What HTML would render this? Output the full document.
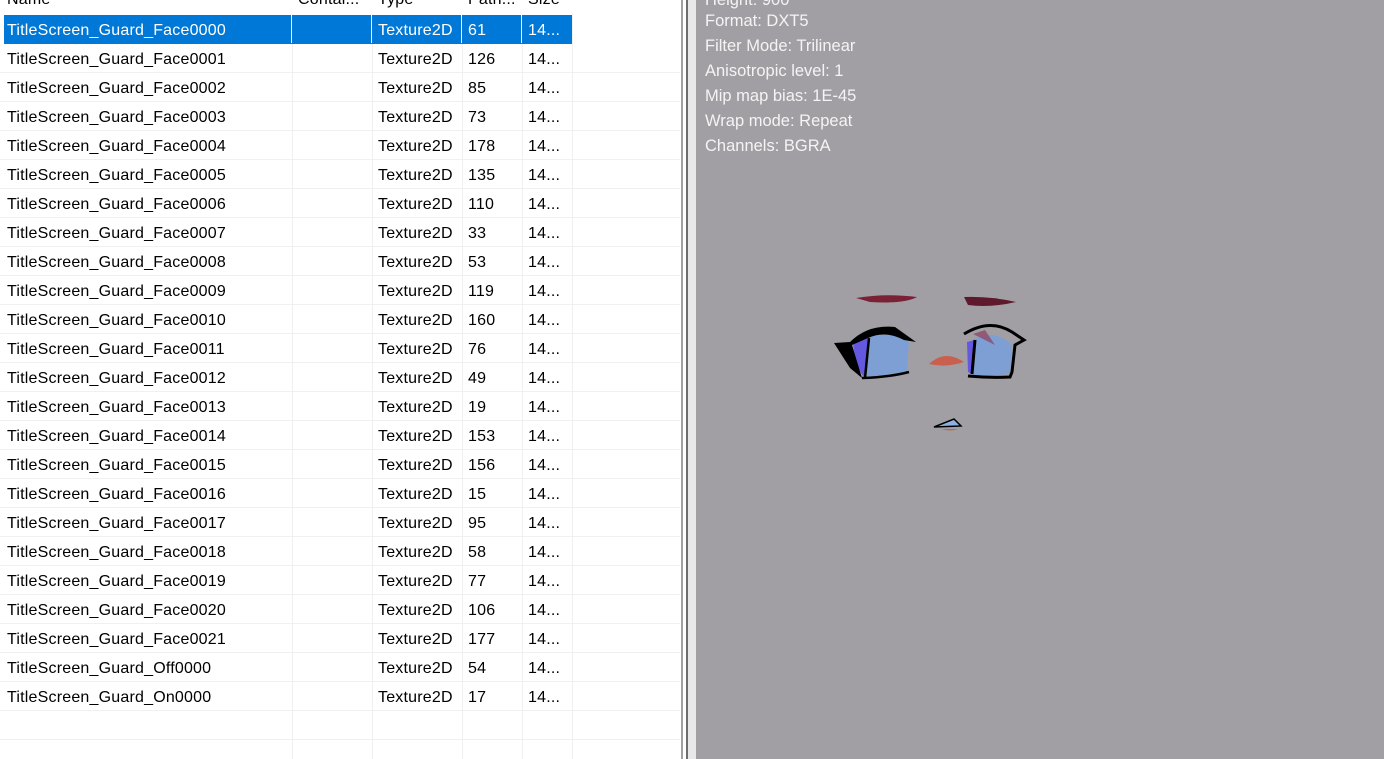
<!DOCTYPE html>
<html><head><meta charset="utf-8"><style>
body{margin:0;width:1384px;height:759px;overflow:hidden;background:#fff;font-family:"Liberation Sans",sans-serif;font-size:16px;color:#000;position:relative;letter-spacing:0.2px}
.l{position:absolute;left:0;top:0;width:680px;height:759px;background:#fff;overflow:hidden}
.row{position:absolute;left:0;width:680px;height:28px;border-bottom:1px solid #f0f0f0}
.c{position:absolute;top:0;height:28px;line-height:32px;white-space:nowrap;overflow:hidden;padding-left:3px;box-sizing:border-box}
.vl{position:absolute;top:0;width:1px;height:759px;background:#f0f0f0}
.sel{background:#0078d7;color:#fff;left:4px;width:568px}
.sel .c{border-right:1px solid #fff;padding-left:6px}
.sel .c.n{padding-left:3px}
.r{position:absolute;left:696px;top:0;width:688px;height:759px;background:#a19fa3;color:#f4f4f4}
.r div{position:absolute;left:9px;font-size:16.5px;letter-spacing:0}
</style></head><body>
<div class="l">
<div class="vl" style="left:292px"></div><div class="vl" style="left:372px"></div><div class="vl" style="left:462px"></div><div class="vl" style="left:522px"></div><div class="vl" style="left:572px"></div>
<div class="row" style="top:-14px;border:none;background:#fff">
<div class="c" style="left:4px;width:288px;line-height:28px">Name</div><div class="c" style="left:295px;width:77px;line-height:28px">Contai...</div><div class="c" style="left:375px;width:87px;line-height:28px">Type</div><div class="c" style="left:465px;width:57px;line-height:28px">Path...</div><div class="c" style="left:525px;width:47px;line-height:28px">Size</div></div>
<div id="rows"></div>
</div>
<div style="position:absolute;left:681px;top:0;width:2px;height:759px;background:#a0a0a0"></div>
<div style="position:absolute;left:686px;top:0;width:2px;height:759px;background:#6d6d6d"></div>
<div style="position:absolute;left:688px;top:0;width:8px;height:759px;background:#e8e8e8"></div>
<div class="r">
<div style="top:-9px">Height: 900</div>
<div style="top:12px">Format: DXT5</div>
<div style="top:37px">Filter Mode: Trilinear</div>
<div style="top:62px">Anisotropic level: 1</div>
<div style="top:87px">Mip map bias: 1E-45</div>
<div style="top:112px">Wrap mode: Repeat</div>
<div style="top:137px">Channels: BGRA</div>
<svg style="position:absolute;left:124px;top:280px" width="220" height="160" viewBox="820 280 220 160">
<path d="M856 298 Q885 293 917 297 Q905 304 870 302 Z" fill="#7a2136"/>
<path d="M964 297 Q990 296 1016 302 Q990 308 968 305 Z" fill="#5e1a2c"/>
<path d="M866 338 Q890 330 909 342 L907 372 Q885 377 866 377 Z" fill="#7e9fd4"/>
<path d="M853 342 L868 338 L865 378 Q855 368 853 342Z" fill="#6558e0"/>
<path d="M834 343 L850 342 Q868 324 895 327 L916 342 L904 340 Q885 330 868 338 L852 345 L862 378 L850 368 Z" fill="#000"/>
<path d="M869 338 L865 378 M862 378 Q890 377 909 372" stroke="#000" stroke-width="2.5" fill="none"/>
<path d="M972 340 Q995 328 1012 345 L1010 373 Q990 378 972 376 Z" fill="#7e9fd4"/>
<path d="M967 342 L975 340 L972 374 L968 372 Z" fill="#6558e0"/>
<path d="M964 334 Q990 318 1012 332 L1024 340 L1015 345 L1012 372 L1010 377 Q990 378 968 376 M975 340 L972 374" fill="none" stroke="#000" stroke-width="3"/>
<path d="M973 334 L995 345 L985 330 Z" fill="#8e4a66" opacity=".8"/>
<path d="M929 364 Q945 349 964 362 Q946 368 929 364Z" fill="#c9604f"/>
<path d="M934 427 L954 419 L961 426 Z" fill="#8fb0e4" stroke="#000" stroke-width="1.5"/>
<path d="M942 429 L958 429 Q950 432 942 429Z" fill="#c9604f"/>
</svg>
</div>
<script>
var d=[61,126,85,73,178,135,110,33,53,119,160,76,49,19,153,156,15,95,58,77,106,177];
var names=[];for(var i=0;i<22;i++)names.push("TitleScreen_Guard_Face00"+(i<10?"0":"")+i);
names.push("TitleScreen_Guard_Off0000");names.push("TitleScreen_Guard_On0000");d.push(54,17);
var h="";
for(var i=0;i<26;i++){var t=15+29*i;
if(i<24){var s=i==0;
h+='<div class="row'+(s?' sel':'')+'" style="top:'+t+'px'+(s?';border-bottom:none;height:29px':'')+'">'+
'<div class="c n" style="left:'+(s?0:4)+'px;width:288px">'+names[i]+'</div>'+
'<div class="c" style="left:'+(s?288:295)+'px;width:'+(s?80:77)+'px"></div>'+
'<div class="c" style="left:'+(s?368:375)+'px;width:'+(s?90:87)+'px">Texture2D</div>'+
'<div class="c" style="left:'+(s?458:465)+'px;width:'+(s?60:57)+'px">'+d[i]+'</div>'+
'<div class="c" style="left:'+(s?518:525)+'px;width:'+(s?50:47)+'px;border:none">14...</div></div>';}
else h+='<div class="row" style="top:'+t+'px"></div>';}
document.getElementById("rows").innerHTML=h;
</script>
</body></html>
